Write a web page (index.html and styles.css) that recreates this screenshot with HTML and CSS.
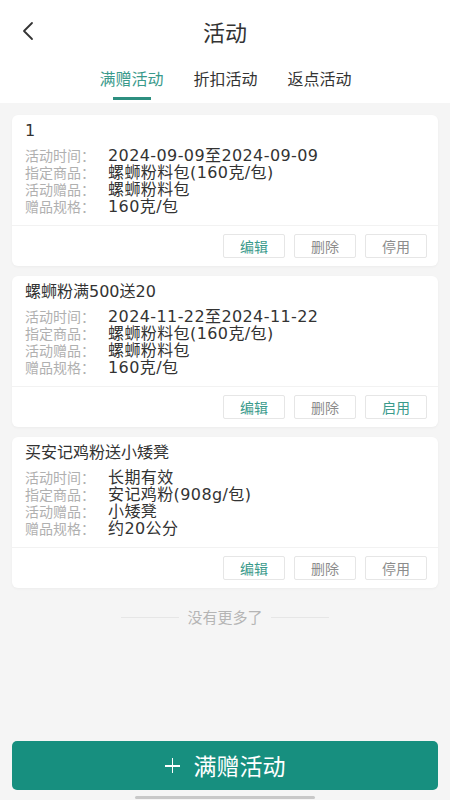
FILE: index.html
```html
<!DOCTYPE html>
<html lang="zh">
<head>
<meta charset="utf-8">
<link rel="stylesheet" href="styles.css">
</head>
<body>
<div class="page">
  <header class="nav">
    <span class="back"><svg width="14" height="20" viewBox="0 0 14 20"><path d="M11 2 L3 10 L11 18" fill="none" stroke="#333" stroke-width="1.8" stroke-linecap="round" stroke-linejoin="round"/></svg></span>
    <h1 class="title">活动</h1>
  </header>
  <nav class="tabs">
    <div class="tab active">满赠活动</div>
    <div class="tab">折扣活动</div>
    <div class="tab">返点活动</div>
  </nav>
  <main class="list">
    <section class="card">
      <div class="card-title">1</div>
      <div class="rows">
        <div class="row"><span class="label">活动时间：</span><span class="value">2024-09-09至2024-09-09</span></div>
        <div class="row"><span class="label">指定商品：</span><span class="value">螺蛳粉料包(160克/包)</span></div>
        <div class="row"><span class="label">活动赠品：</span><span class="value">螺蛳粉料包</span></div>
        <div class="row"><span class="label">赠品规格：</span><span class="value">160克/包</span></div>
      </div>
      <div class="actions">
        <span class="btn green">编辑</span>
        <span class="btn">删除</span>
        <span class="btn">停用</span>
      </div>
    </section>
    <section class="card">
      <div class="card-title">螺蛳粉满500送20</div>
      <div class="rows">
        <div class="row"><span class="label">活动时间：</span><span class="value">2024-11-22至2024-11-22</span></div>
        <div class="row"><span class="label">指定商品：</span><span class="value">螺蛳粉料包(160克/包)</span></div>
        <div class="row"><span class="label">活动赠品：</span><span class="value">螺蛳粉料包</span></div>
        <div class="row"><span class="label">赠品规格：</span><span class="value">160克/包</span></div>
      </div>
      <div class="actions">
        <span class="btn green">编辑</span>
        <span class="btn">删除</span>
        <span class="btn green">启用</span>
      </div>
    </section>
    <section class="card">
      <div class="card-title">买安记鸡粉送小矮凳</div>
      <div class="rows">
        <div class="row"><span class="label">活动时间：</span><span class="value">长期有效</span></div>
        <div class="row"><span class="label">指定商品：</span><span class="value">安记鸡粉(908g/包)</span></div>
        <div class="row"><span class="label">活动赠品：</span><span class="value">小矮凳</span></div>
        <div class="row"><span class="label">赠品规格：</span><span class="value">约20公分</span></div>
      </div>
      <div class="actions">
        <span class="btn green">编辑</span>
        <span class="btn">删除</span>
        <span class="btn">停用</span>
      </div>
    </section>
    <div class="end"><span class="line"></span><span class="end-text">没有更多了</span><span class="line"></span></div>
  </main>
  <footer class="footer">
    <div class="add-btn"><span class="plus"></span>满赠活动</div>
  </footer>
  <div class="home-bar"></div>
</div>
</body>
</html>
```

FILE: styles.css
```css
* { box-sizing: border-box; margin: 0; padding: 0; }
html, body { width: 450px; height: 800px; }
body {
  font-family: "Noto Sans CJK SC", "Noto Sans", sans-serif;
  background: #f5f5f5;
  color: #333;
}
.page {
  position: relative;
  height: 800px;
  display: flex;
  flex-direction: column;
}
.nav {
  height: 62px;
  background: #fff;
  display: flex;
  align-items: center;
  justify-content: center;
  position: relative;
}
.back {
  position: absolute;
  left: 21px;
  top: 21px;
  width: 14px;
  height: 20px;
  display: flex;
}
.title {
  font-size: 22px;
  font-weight: 400;
  color: #333;
  line-height: 1;
}
.tabs {
  height: 41px;
  background: #fff;
  display: flex;
  justify-content: center;
  gap: 29px;
  padding-left: 1px;
}
.tab {
  font-size: 16px;
  color: #333;
  line-height: 1;
  padding-top: 8px;
  position: relative;
  width: 65px;
  text-align: center;
}
.tab.active { color: #3a9a8b; }
.tab.active::after {
  content: "";
  position: absolute;
  left: 14px;
  width: 38px;
  top: 35px;
  height: 3px;
  background: #2d8f80;
}
.list {
  flex: 1;
  padding: 12px 12px 0;
  display: flex;
  flex-direction: column;
  gap: 10px;
}
.card {
  background: #fff;
  border-radius: 6px;
  box-shadow: 0 1px 3px rgba(0,0,0,0.04);
}
.card-title {
  padding: 6px 13px 0;
  font-family: "DejaVu Sans", "Noto Sans CJK SC", sans-serif;
  font-size: 16px;
  line-height: 20px;
  color: #333;
}
.rows {
  padding: 6px 13px 10px;
}
.row {
  display: flex;
  line-height: 17px;
  height: 17px;
}
.label {
  width: 83px;
  color: #b0b0b0;
  font-size: 14px;
  line-height: 17px;
}
.value {
  font-family: "DejaVu Sans", "Noto Sans CJK SC", sans-serif;
  font-size: 16px;
  line-height: 17px;
  color: #333;
  letter-spacing: 0.4px;
}
.actions {
  border-top: 1px solid #f2f2f2;
  display: flex;
  justify-content: flex-end;
  gap: 9px;
  padding: 8px 11px 8px;
}
.btn {
  width: 62px;
  height: 24px;
  border: 1px solid #e6e6e6;
  border-radius: 2px;
  font-size: 14px;
  line-height: 1;
  color: #8c8c8c;
  display: flex;
  align-items: center;
  justify-content: center;
}
.btn.green { color: #3a9a8b; }
.end {
  margin-top: 9px;
  display: flex;
  align-items: center;
  justify-content: center;
}
.line {
  width: 58px;
  height: 1px;
  background: #e6e6e6;
}
.end-text {
  margin: 0 8px;
  font-size: 15px;
  line-height: 20px;
  color: #b5b5b5;
}
.footer {
  padding: 0 12px 10px;
}
.add-btn {
  height: 49px;
  border-radius: 5px;
  background: #178f7f;
  color: #fff;
  font-size: 23px;
  line-height: 1;
  display: flex;
  align-items: center;
  justify-content: center;
}
.plus {
  width: 15px;
  height: 15px;
  margin-right: 14px;
  position: relative;
}
.plus::before, .plus::after {
  content: "";
  position: absolute;
  background: #fff;
}
.plus::before { left: 0; right: 0; top: 7px; height: 1.6px; }
.plus::after { top: 0; bottom: 0; left: 7px; width: 1.6px; }
.home-bar {
  position: absolute;
  left: 135px;
  top: 796px;
  width: 180px;
  height: 3px;
  background: #c8c8c8;
  border-radius: 2px;
}
```
